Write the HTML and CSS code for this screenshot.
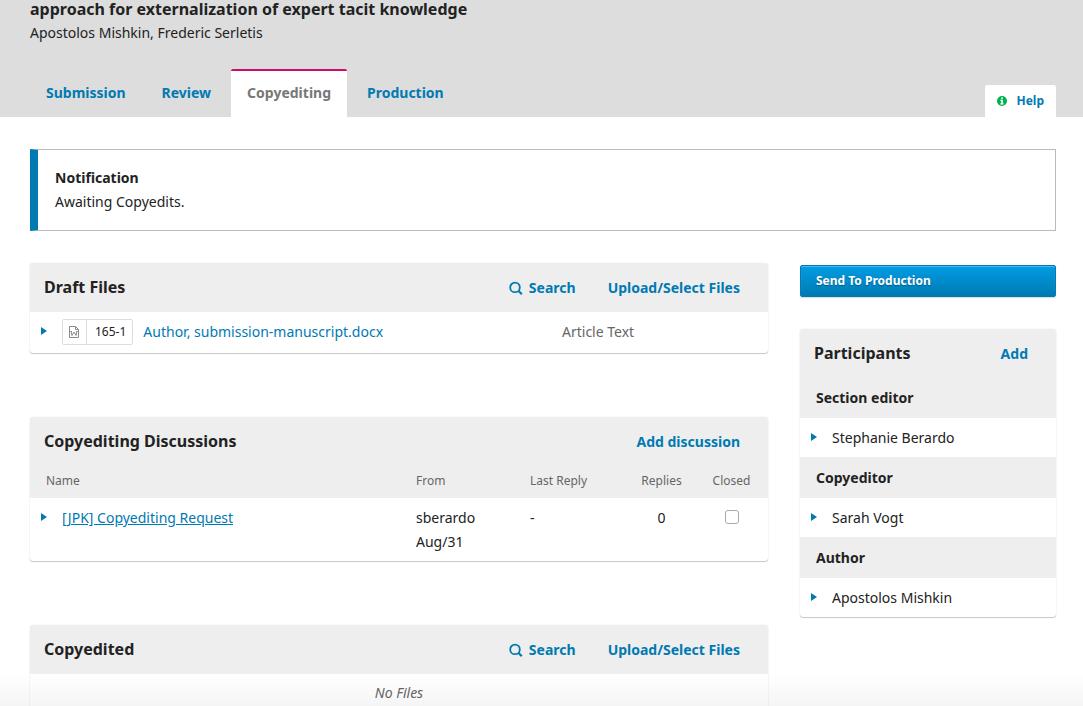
FILE: index.html
```html
<!DOCTYPE html>
<html lang="en">
<head>
<meta charset="utf-8">
<title>Copyediting</title>
<link rel="stylesheet" href="styles.css">
</head>
<body>
<div class="page">
  <header class="header">
    <h1 class="title">approach for externalization of expert tacit knowledge</h1>
    <div class="authors">Apostolos Mishkin, Frederic Serletis</div>
    <div class="tab-row">
      <nav class="tabs">
        <a class="tab" href="#">Submission</a>
        <a class="tab" href="#">Review</a>
        <a class="tab active" href="#">Copyediting</a>
        <a class="tab" href="#">Production</a>
      </nav>
      <a class="help" href="#">
        <svg width="10" height="10" viewBox="0 0 10 10"><circle cx="5" cy="5" r="5" fill="#00b24e"/><path d="M4.2 1.4h1.7v1.5H4.2zM3.3 3.7h2.6v3.5h.7v1.2H3.3V7.2h.9V4.9h-.9z" fill="#fff"/></svg>
        Help
      </a>
    </div>
  </header>

  <main class="content">
    <section class="notice">
      <h2 class="notice-title">Notification</h2>
      <p class="notice-text">Awaiting Copyedits.</p>
    </section>

    <div class="columns">
      <div class="primary">
        <section class="card">
          <div class="card-head">
            <h2 class="card-title">Draft Files</h2>
            <div class="actions">
              <a class="action" href="#"><svg class="search" width="14" height="14" viewBox="0 0 14 14"><circle cx="6" cy="6.4" r="4.8" fill="none" stroke="#007ab2" stroke-width="1.8"/><path d="M9.4 9.8L12.8 13.2" stroke="#007ab2" stroke-width="2.2"/></svg>Search</a>
              <a class="action" href="#">Upload/Select Files</a>
            </div>
          </div>
          <div class="file-row">
            <svg class="arrow" width="6" height="10" viewBox="0 0 6 10"><path d="M0 0L6 4L0 8z" fill="#007ab2"/></svg>
            <span class="badge">
              <span class="badge-icon"><svg width="12" height="14" viewBox="0 0 12 14" fill="none" stroke="#8b8b8b"><path d="M1.5 1.5h6l3 3v8h-9zM7.5 1.5v3h3"/><path d="M3 6.5l1 4L6 7l2 3.5 1-4M2.4 6.5h1.6M8 6.5h1.6"/></svg></span>
              <span class="badge-id">165-1</span>
            </span>
            <a class="file-name" href="#">Author, submission-manuscript.docx</a>
            <span class="file-type">Article Text</span>
          </div>
        </section>

        <section class="card">
          <div class="card-head">
            <h2 class="card-title">Copyediting Discussions</h2>
            <div class="actions"><a class="action" href="#">Add discussion</a></div>
          </div>
          <table class="talks">
            <colgroup><col><col class="c-from"><col class="c-last"><col class="c-replies"><col class="c-closed"></colgroup>
            <thead>
              <tr><th>Name</th><th>From</th><th>Last Reply</th><th class="mid">Replies</th><th class="mid">Closed</th></tr>
            </thead>
            <tbody>
              <tr>
                <td class="name"><svg class="arrow" width="6" height="10" viewBox="0 0 6 10"><path d="M0 0L6 4L0 8z" fill="#007ab2"/></svg><a class="talk-link" href="#">[JPK] Copyediting Request</a></td>
                <td>sberardo<br>Aug/31</td>
                <td>-</td>
                <td class="mid">0</td>
                <td class="mid"><input class="check" type="checkbox" aria-label="Closed"></td>
              </tr>
            </tbody>
          </table>
        </section>

        <section class="card">
          <div class="card-head">
            <h2 class="card-title">Copyedited</h2>
            <div class="actions">
              <a class="action" href="#"><svg class="search" width="14" height="14" viewBox="0 0 14 14"><circle cx="6" cy="6.4" r="4.8" fill="none" stroke="#007ab2" stroke-width="1.8"/><path d="M9.4 9.8L12.8 13.2" stroke="#007ab2" stroke-width="2.2"/></svg>Search</a>
              <a class="action" href="#">Upload/Select Files</a>
            </div>
          </div>
          <p class="empty">No Files</p>
        </section>
      </div>

      <aside class="side">
        <button class="send" type="button">Send To Production</button>
        <section class="card">
          <div class="card-head">
            <h2 class="card-title">Participants</h2>
            <div class="actions"><a class="action" href="#">Add</a></div>
          </div>
          <h3 class="role first">Section editor</h3>
          <div class="person"><svg class="arrow" width="6" height="10" viewBox="0 0 6 10"><path d="M0 0L6 4L0 8z" fill="#007ab2"/></svg>Stephanie Berardo</div>
          <h3 class="role">Copyeditor</h3>
          <div class="person"><svg class="arrow" width="6" height="10" viewBox="0 0 6 10"><path d="M0 0L6 4L0 8z" fill="#007ab2"/></svg>Sarah Vogt</div>
          <h3 class="role">Author</h3>
          <div class="person"><svg class="arrow" width="6" height="10" viewBox="0 0 6 10"><path d="M0 0L6 4L0 8z" fill="#007ab2"/></svg>Apostolos Mishkin</div>
        </section>
      </aside>
    </div>
  </main>
  <div class="fade"></div>
</div>
</body>
</html>
```

FILE: styles.css
```css
* { box-sizing: border-box; }
body {
  margin: 0;
  background: #fff;
  color: #222;
  font: 14px/24px "Noto Sans", sans-serif;
}
h1, h2, h3, p { margin: 0; }
a { color: #007ab2; text-decoration: none; }
svg { flex: none; display: block; }

.page { position: relative; height: 100vh; overflow: hidden; }

.header { padding: 0 27px 0 30px; background: #ddd; }
.title { padding-bottom: 2px; font-size: 16px; line-height: 18px; font-weight: 700; }
.authors { line-height: 25px; }
.tab-row { display: flex; justify-content: space-between; align-items: flex-end; margin-top: 24px; }
.tabs { display: flex; gap: 4px; }
.tab { padding: 10px 16px 12px; border-top: 2px solid transparent; font-weight: 700; }
.tab.active { background: #fff; border-color: #d00a6c; border-radius: 2px 2px 0 0; color: #777; }
.help {
  display: flex;
  align-items: center;
  gap: 9px;
  padding: 0 12px;
  background: #fff;
  border-radius: 2px 2px 0 0;
  font-size: 12px;
  line-height: 32px;
  font-weight: 700;
}

.content { padding: 32px 27px 0 30px; }
.notice { padding: 16px 17px; border: 1px solid #bbb; border-left: 8px solid #007ab2; }
.notice-title { font-size: 14px; line-height: 24px; }

.columns { display: grid; grid-template-columns: 1fr 256px; gap: 32px; margin-top: 32px; }
.primary { display: flex; flex-direction: column; gap: 64px; }
.side { padding-top: 2px; }

.card {
  overflow: hidden;
  background: #fff;
  border-radius: 3px;
  box-shadow: 0 0 1px rgba(0, 0, 0, .2), 0 1px 1px rgba(0, 0, 0, .2);
}
.card-head {
  display: flex;
  justify-content: space-between;
  align-items: flex-start;
  padding: 12px 28px 11px 14px;
  background: #eee;
}
.card-title { font-size: 16px; line-height: 24px; }
.actions { display: flex; gap: 32px; line-height: 26px; font-weight: 700; }
.action { display: flex; align-items: center; gap: 6px; }

.file-row { display: flex; align-items: center; padding: 7px 0 8px 11px; }
.badge {
  display: flex;
  margin: 0 10px 0 15px;
  border: 1px solid #ddd;
  border-radius: 2px;
  font-size: 12px;
}
.badge-icon { display: flex; align-items: center; padding: 0 6px 0 5px; border-right: 1px solid #ddd; }
.badge-id { padding: 0 6px 0 8px; }
.file-type { width: 206px; margin-left: auto; color: #666; }

.talks { width: 100%; table-layout: fixed; border-collapse: collapse; }
.talks th {
  padding: 3px 0 5px 16px;
  background: #eee;
  color: #666;
  font-size: 12px;
  font-weight: 400;
  text-align: left;
}
.talks td { padding: 8px 0 7px 16px; vertical-align: top; }
.talks .name { display: flex; align-items: center; padding-left: 11px; }
.talks .mid { padding-left: 0; padding-right: 0; text-align: center; }
.talk-link { margin-left: 15px; text-decoration: underline; }
.c-from, .c-last { width: 114px; }
.c-replies { width: 67px; }
.c-closed { width: 73px; }
.check {
  appearance: none;
  display: block;
  width: 14px;
  height: 14px;
  margin: 4px auto;
  border: 1px solid #aaa;
  border-radius: 3px;
  background: #fff;
}
.empty { padding: 7px 0; color: #666; font-style: italic; text-align: center; }

.send {
  display: block;
  width: 100%;
  margin-bottom: 32px;
  padding: 0 15px;
  border: 1px solid #007ab2;
  border-radius: 2px;
  background: linear-gradient(#009de5, #007ab2);
  box-shadow: inset 0 1px 1px rgba(255, 255, 255, .3), 0 1px 1px rgba(0, 0, 0, .15);
  color: #fff;
  font: 700 12px/30px "Noto Sans", sans-serif;
  text-align: left;
  text-shadow: 0 1px 1px rgba(0, 0, 0, .3);
}
.role { padding: 9px 16px 8px; background: #eee; font-size: 14px; line-height: 24px; }
.role.first { padding-top: 8px; }
.person { display: flex; align-items: center; gap: 15px; padding: 8px 11px 7px; }

.fade {
  position: absolute;
  right: 0;
  bottom: 0;
  left: 0;
  height: 32px;
  background: linear-gradient(rgba(0, 0, 0, 0), rgba(0, 0, 0, .04));
  pointer-events: none;
}
```
